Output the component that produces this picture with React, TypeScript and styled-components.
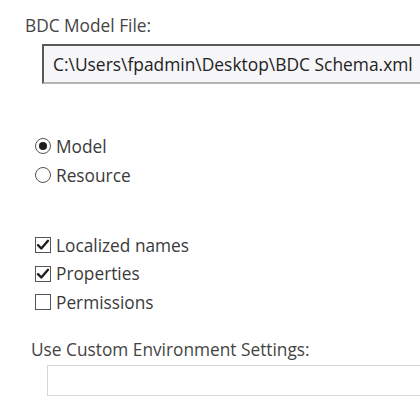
import styled, { createGlobalStyle } from "styled-components";

const GlobalStyle = createGlobalStyle`
    body {
        margin: 0;
        background: #ffffff;
        font-family: "Open Sans", "Noto Sans", sans-serif;
        color: #444444;
    }
`;

// whole settings panel
const Panel = styled.div`
    width: 420px;
    height: 420px;
    overflow: hidden;
    padding-top: 16px;
    box-sizing: border-box;
`;

// a caption above a field
const FieldLabel = styled.div<{ $indent: number; $top?: number }>`
    margin-left: ${(p) => p.$indent}px;
    margin-top: ${(p) => p.$top ?? 0}px;
    font-size: 17.3px;
    line-height: 20px;
    color: #444444;
    white-space: nowrap;
`;

// sunken text box holding the file path
const PathBox = styled.div`
    margin: 8px 0 0 42px;
    height: 40px;
    box-sizing: border-box;
    border-top: 2px solid #5a5a5a;
    border-left: 2px solid #5a5a5a;
    border-bottom: 2px solid #b4b4b4;
    background: #f6f5f8;
    padding-left: 9px;
    display: flex;
    align-items: center;
    font-size: 17.4px;
    color: #222222;
    white-space: nowrap;
`;

// plain empty text box
const EmptyBox = styled.div`
    margin: 5px 0 0 47px;
    height: 31px;
    box-sizing: border-box;
    border: 1px solid #d6d6d6;
    border-right: none;
    background: #ffffff;
`;

// stack of radio or checkbox rows
const OptionGroup = styled.div<{ $top: number; $gap: number }>`
    margin: ${(p) => p.$top}px 0 0 35px;
    display: flex;
    flex-direction: column;
    gap: ${(p) => p.$gap}px;
`;

const OptionRow = styled.div`
    display: flex;
    align-items: center;
    gap: 5px;
    height: 16px;
    font-size: 17.3px;
    color: #3a3a3a;
    white-space: nowrap;
`;

const RadioCircle = styled.span<{ $on: boolean }>`
    width: 16px;
    height: 16px;
    box-sizing: border-box;
    border: 1px solid #555555;
    border-radius: 50%;
    display: flex;
    align-items: center;
    justify-content: center;
    flex-shrink: 0;

    &::after {
        content: "";
        display: ${(p) => (p.$on ? "block" : "none")};
        width: 8px;
        height: 8px;
        border-radius: 50%;
        background: #1e1e1e;
    }
`;

const CheckSquare = styled.span`
    width: 16px;
    height: 16px;
    box-sizing: border-box;
    border: 1px solid #555555;
    display: flex;
    align-items: center;
    justify-content: center;
    flex-shrink: 0;
`;

function Radio({ on, label }: { on: boolean; label: string }) {
    return (
        <OptionRow>
            <RadioCircle $on={on} />
            {label}
        </OptionRow>
    );
}

function Check({ on, label }: { on: boolean; label: string }) {
    return (
        <OptionRow>
            <CheckSquare>
                {on && (
                    <svg width="14" height="14" viewBox="0 0 14 14">
                        <path d="M2 7.2 L5.3 10.5 L12 2.8" fill="none" stroke="#1e1e1e" strokeWidth="2.4" strokeLinecap="round" strokeLinejoin="round" />
                    </svg>
                )}
            </CheckSquare>
            {label}
        </OptionRow>
    );
}

export default function App() {
    return (
        <>
            <GlobalStyle />
            <Panel>
                <FieldLabel $indent={25}>BDC Model File:</FieldLabel>
                <PathBox>C:\Users\fpadmin\Desktop\BDC Schema.xml</PathBox>

                <OptionGroup $top={54} $gap={13}>
                    <Radio on label="Model" />
                    <Radio on={false} label="Resource" />
                </OptionGroup>

                <OptionGroup $top={54} $gap={12.5}>
                    <Check on label="Localized names" />
                    <Check on label="Properties" />
                    <Check on={false} label="Permissions" />
                </OptionGroup>

                <FieldLabel $indent={31} $top={30}>Use Custom Environment Settings:</FieldLabel>
                <EmptyBox />
            </Panel>
        </>
    );
}
